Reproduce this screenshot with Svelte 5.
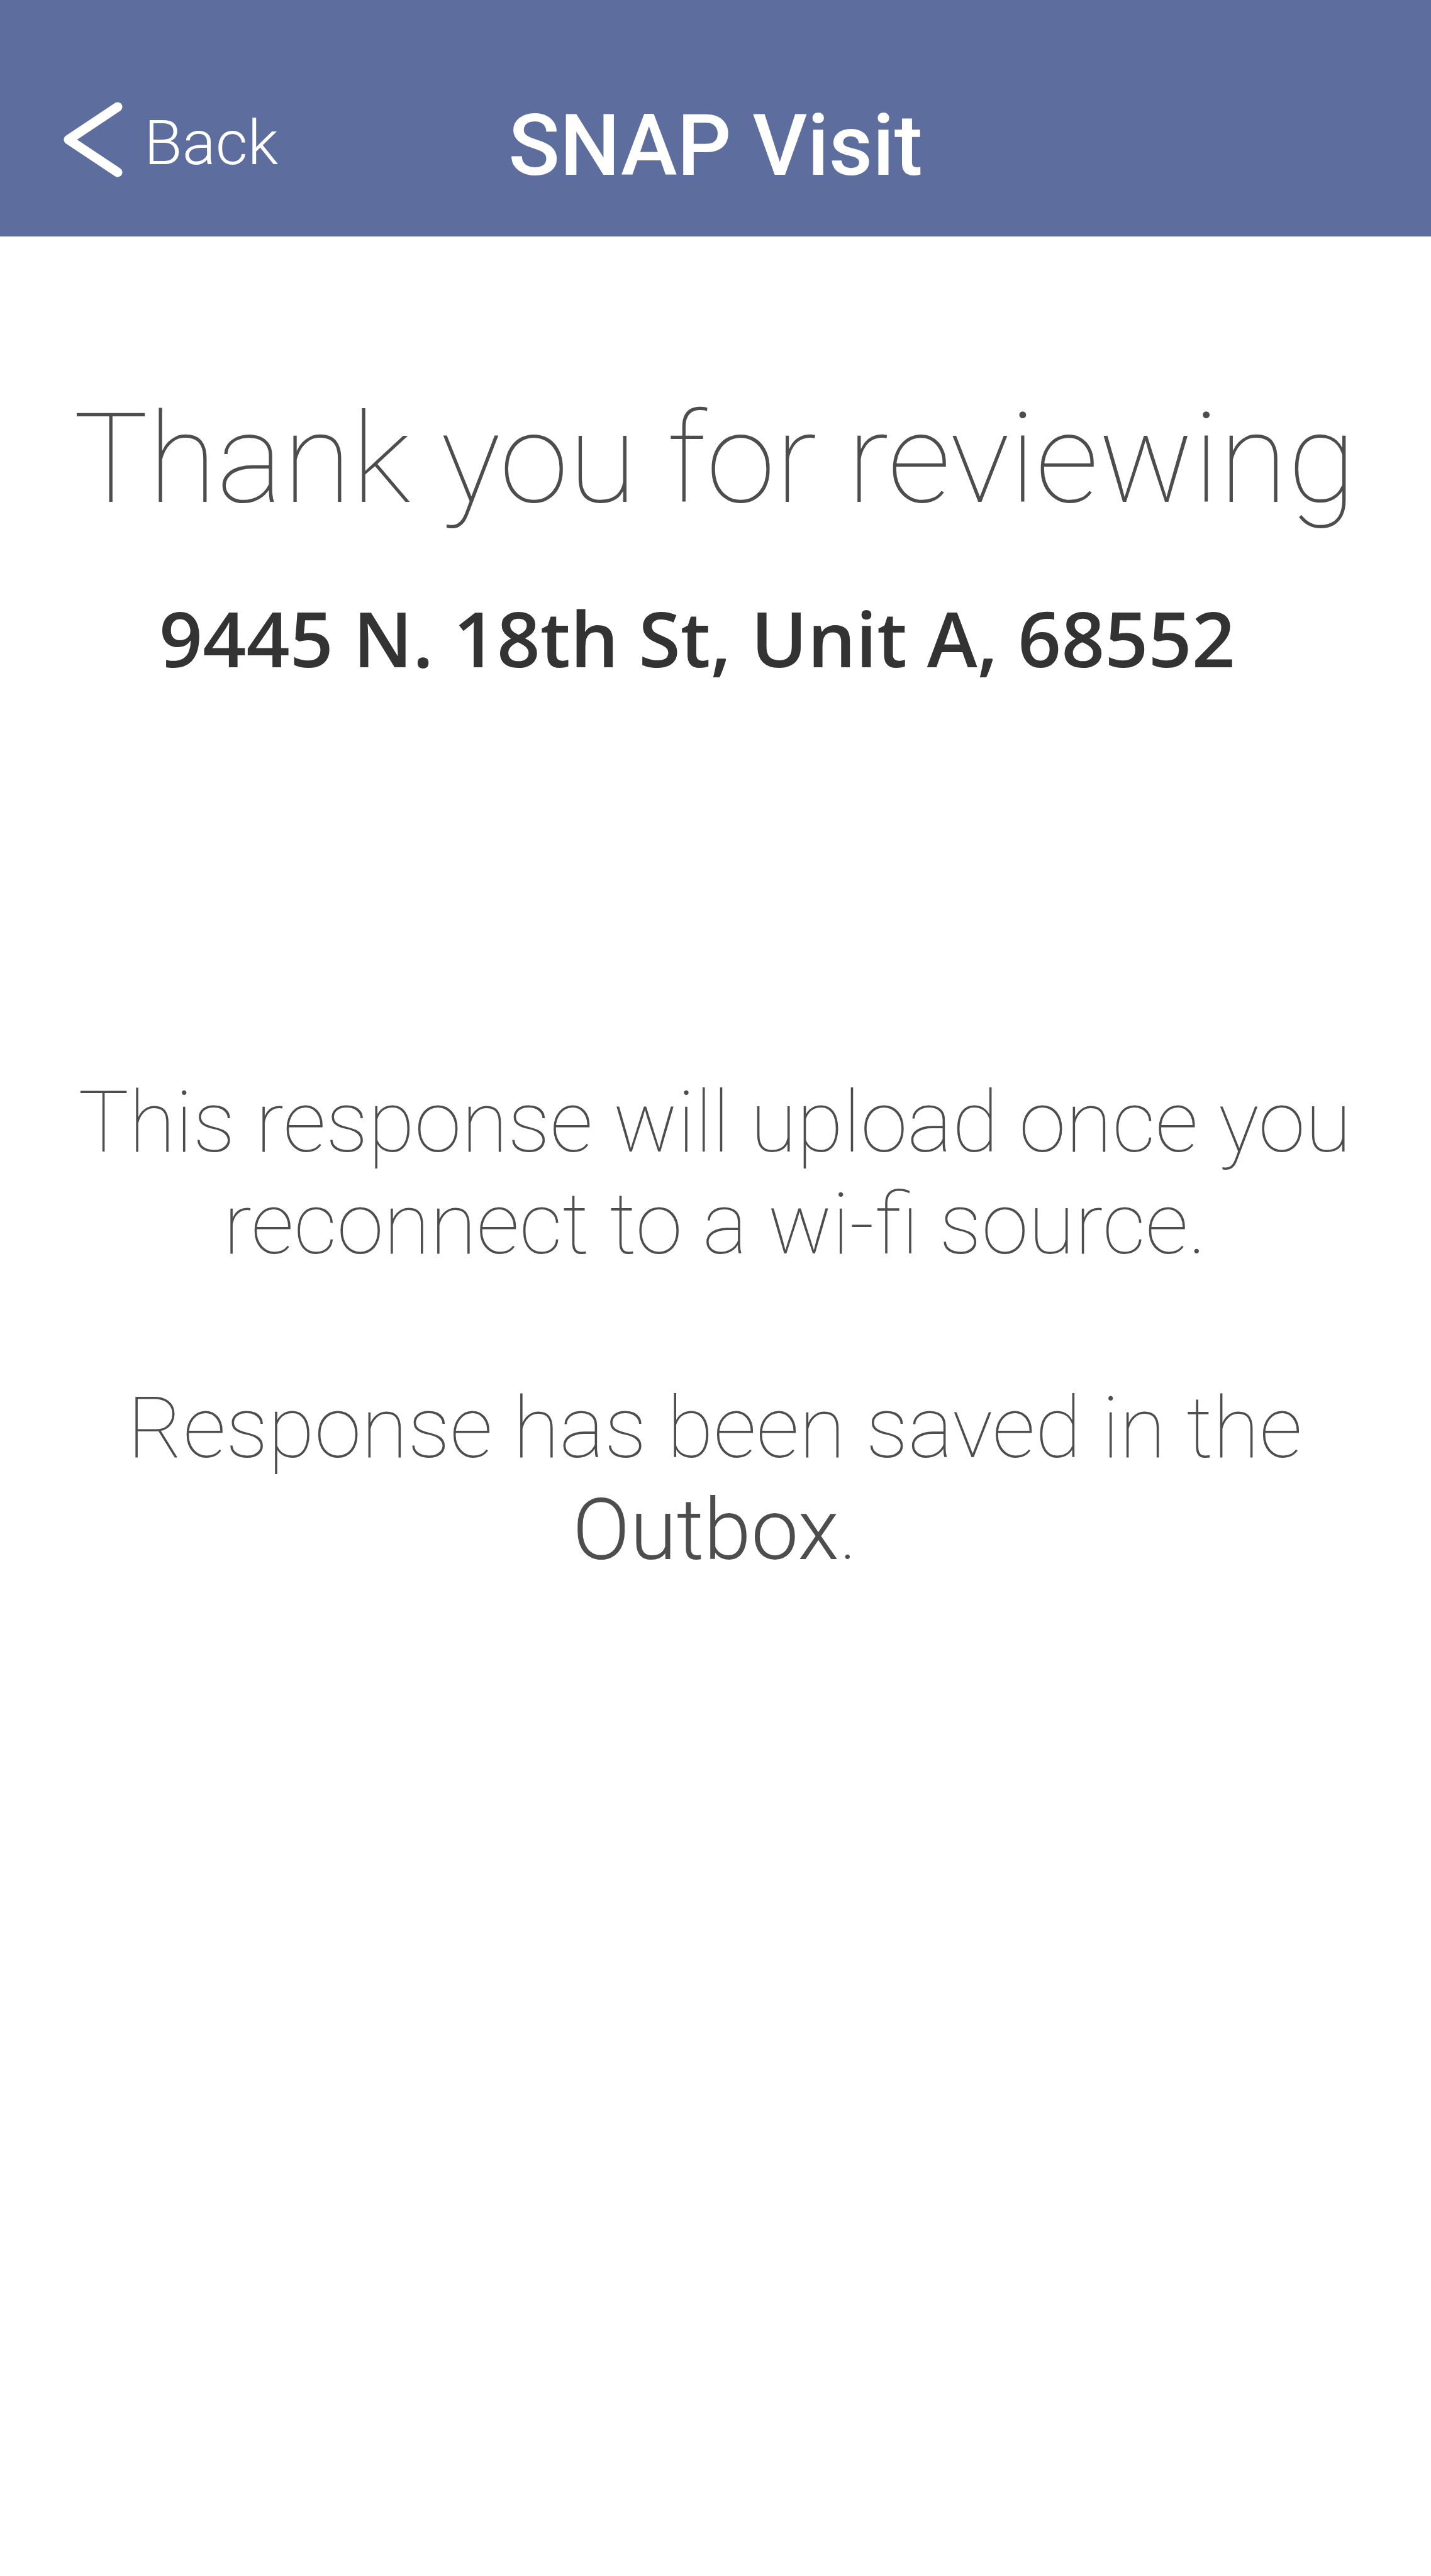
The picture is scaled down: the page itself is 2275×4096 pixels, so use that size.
<script>
  const address = '9445 N. 18th St, Unit A, 68552';
</script>

<div class="screen">
  <header>
    <a class="back" href="#back">
      <svg viewBox="0 0 94 120" aria-hidden="true"><path d="M86 8 8 60 86 112" /></svg>
      <span>Back</span>
    </a>
    <h1>SNAP Visit</h1>
  </header>
  <main>
    <h2>Thank you for reviewing</h2>
    <p class="address">{address}</p>
    <div class="message">
      <p>This response will upload once you<br />reconnect to a wi-fi source.</p>
      <p>Response has been saved in the<br /><strong>Outbox</strong>.</p>
    </div>
  </main>
</div>

<style>
  :global(body) { margin: 0; background: #fff; }
  .screen { min-height: 100vh; font-family: Roboto, sans-serif; color: #4d4d4d; background: #fff; }
  header {
    display: grid;
    grid-template-columns: 1fr auto 1fr;
    align-items: center;
    height: 376px;
    padding: 88px 101px 0;
    box-sizing: border-box;
    background: #5d6d9e;
    color: #fff;
  }
  .back {
    display: flex;
    align-items: center;
    justify-self: start;
    gap: 34px;
    padding-bottom: 10px;
    color: inherit;
    text-decoration: none;
    font-size: 99px;
    font-weight: 300;
  }
  svg {
    width: 94px;
    height: 120px;
    margin-bottom: 10px;
    fill: none;
    stroke: #fff;
    stroke-width: 15;
    stroke-linecap: round;
    stroke-linejoin: round;
  }
  h1 { margin: 0; font-size: 135px; font-weight: 500; line-height: 160px; }
  main { text-align: center; padding: 232px 2px 0 0; }
  h2 { margin: 0; font-size: 199px; font-weight: 100; line-height: 244px; }
  p { margin: 0; }
  .address {
    margin-top: 80px;
    padding-right: 56px;
    font-family: "Open Sans", sans-serif;
    font-size: 121px;
    font-weight: 600;
    line-height: 164px;
    color: #333;
  }
  .message { margin-top: 608px; display: grid; gap: 162px; font-size: 135px; font-weight: 100; line-height: 162px; }
  strong { font-weight: 300; }
</style>
